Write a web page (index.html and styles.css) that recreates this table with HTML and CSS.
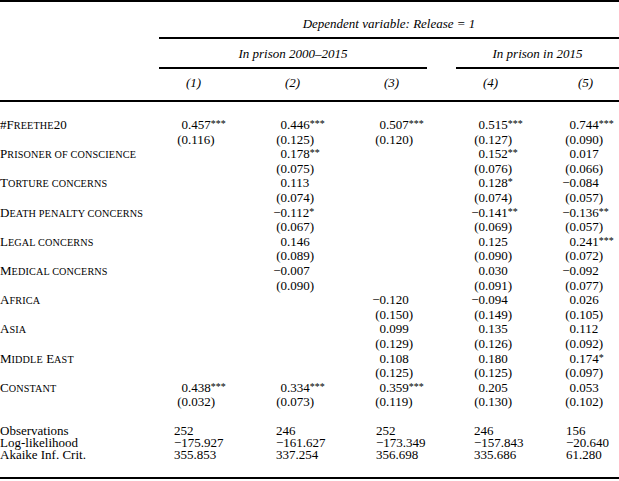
FILE: index.html
```html
<!DOCTYPE html>
<html>
<head>
<meta charset="utf-8">
<link rel="stylesheet" href="styles.css">
</head>
<body>
<div class="table">
  <div class="hrow h1">
    <div class="lab"></div>
    <div class="span">Dependent variable: Release = 1</div>
  </div>
  <div class="hrow h2">
    <div class="lab"></div>
    <div class="span s1">In prison 2000–2015</div>
    <div class="gap"></div>
    <div class="span s2">In prison in 2015</div>
  </div>
  <div class="grid h3">
    <div></div>
    <div class="mh">(1)</div>
    <div class="mh">(2)</div>
    <div class="mh">(3)</div>
    <div class="mh">(4)</div>
    <div class="mh last">(5)</div>
  </div>

  <div class="grid body">
    <div class="lab">#F<span class="sm">reethe</span>20</div>
    <div class="c"><span class="i">0</span>.457<span class="st">***</span></div>
    <div class="c"><span class="i">0</span>.446<span class="st">***</span></div>
    <div class="c"><span class="i">0</span>.507<span class="st">***</span></div>
    <div class="c"><span class="i">0</span>.515<span class="st">***</span></div>
    <div class="c"><span class="i">0</span>.744<span class="st">***</span></div>
    <div></div>
    <div class="c"><span class="i">(0</span>.116)</div>
    <div class="c"><span class="i">(0</span>.125)</div>
    <div class="c"><span class="i">(0</span>.120)</div>
    <div class="c"><span class="i">(0</span>.127)</div>
    <div class="c"><span class="i">(0</span>.090)</div>

    <div class="lab">P<span class="sm">risoner of conscience</span></div>
    <div></div>
    <div class="c"><span class="i">0</span>.178<span class="st">**</span></div>
    <div></div>
    <div class="c"><span class="i">0</span>.152<span class="st">**</span></div>
    <div class="c"><span class="i">0</span>.017</div>
    <div></div><div></div>
    <div class="c"><span class="i">(0</span>.075)</div>
    <div></div>
    <div class="c"><span class="i">(0</span>.076)</div>
    <div class="c"><span class="i">(0</span>.066)</div>

    <div class="lab">T<span class="sm">orture concerns</span></div>
    <div></div>
    <div class="c"><span class="i">0</span>.113</div>
    <div></div>
    <div class="c"><span class="i">0</span>.128<span class="st">*</span></div>
    <div class="c"><span class="i">−0</span>.084</div>
    <div></div><div></div>
    <div class="c"><span class="i">(0</span>.074)</div>
    <div></div>
    <div class="c"><span class="i">(0</span>.074)</div>
    <div class="c"><span class="i">(0</span>.057)</div>

    <div class="lab">D<span class="sm">eath penalty concerns</span></div>
    <div></div>
    <div class="c"><span class="i">−0</span>.112<span class="st">*</span></div>
    <div></div>
    <div class="c"><span class="i">−0</span>.141<span class="st">**</span></div>
    <div class="c"><span class="i">−0</span>.136<span class="st">**</span></div>
    <div></div><div></div>
    <div class="c"><span class="i">(0</span>.067)</div>
    <div></div>
    <div class="c"><span class="i">(0</span>.069)</div>
    <div class="c"><span class="i">(0</span>.057)</div>

    <div class="lab">L<span class="sm">egal concerns</span></div>
    <div></div>
    <div class="c"><span class="i">0</span>.146</div>
    <div></div>
    <div class="c"><span class="i">0</span>.125</div>
    <div class="c"><span class="i">0</span>.241<span class="st">***</span></div>
    <div></div><div></div>
    <div class="c"><span class="i">(0</span>.089)</div>
    <div></div>
    <div class="c"><span class="i">(0</span>.090)</div>
    <div class="c"><span class="i">(0</span>.072)</div>

    <div class="lab">M<span class="sm">edical concerns</span></div>
    <div></div>
    <div class="c"><span class="i">−0</span>.007</div>
    <div></div>
    <div class="c"><span class="i">0</span>.030</div>
    <div class="c"><span class="i">−0</span>.092</div>
    <div></div><div></div>
    <div class="c"><span class="i">(0</span>.090)</div>
    <div></div>
    <div class="c"><span class="i">(0</span>.091)</div>
    <div class="c"><span class="i">(0</span>.077)</div>

    <div class="lab">A<span class="sm">frica</span></div>
    <div></div><div></div>
    <div class="c"><span class="i">−0</span>.120</div>
    <div class="c"><span class="i">−0</span>.094</div>
    <div class="c"><span class="i">0</span>.026</div>
    <div></div><div></div><div></div>
    <div class="c"><span class="i">(0</span>.150)</div>
    <div class="c"><span class="i">(0</span>.149)</div>
    <div class="c"><span class="i">(0</span>.105)</div>

    <div class="lab">A<span class="sm">sia</span></div>
    <div></div><div></div>
    <div class="c"><span class="i">0</span>.099</div>
    <div class="c"><span class="i">0</span>.135</div>
    <div class="c"><span class="i">0</span>.112</div>
    <div></div><div></div><div></div>
    <div class="c"><span class="i">(0</span>.129)</div>
    <div class="c"><span class="i">(0</span>.126)</div>
    <div class="c"><span class="i">(0</span>.092)</div>

    <div class="lab">M<span class="sm">iddle</span> E<span class="sm">ast</span></div>
    <div></div><div></div>
    <div class="c"><span class="i">0</span>.108</div>
    <div class="c"><span class="i">0</span>.180</div>
    <div class="c"><span class="i">0</span>.174<span class="st">*</span></div>
    <div></div><div></div><div></div>
    <div class="c"><span class="i">(0</span>.125)</div>
    <div class="c"><span class="i">(0</span>.125)</div>
    <div class="c"><span class="i">(0</span>.097)</div>

    <div class="lab">C<span class="sm">onstant</span></div>
    <div class="c"><span class="i">0</span>.438<span class="st">***</span></div>
    <div class="c"><span class="i">0</span>.334<span class="st">***</span></div>
    <div class="c"><span class="i">0</span>.359<span class="st">***</span></div>
    <div class="c"><span class="i">0</span>.205</div>
    <div class="c"><span class="i">0</span>.053</div>
    <div></div>
    <div class="c"><span class="i">(0</span>.032)</div>
    <div class="c"><span class="i">(0</span>.073)</div>
    <div class="c"><span class="i">(0</span>.119)</div>
    <div class="c"><span class="i">(0</span>.130)</div>
    <div class="c"><span class="i">(0</span>.102)</div>
  </div>

  <div class="grid stats">
    <div class="lab">Observations</div>
    <div class="s">252</div>
    <div class="s">246</div>
    <div class="s">252</div>
    <div class="s">246</div>
    <div class="s">156</div>
    <div class="lab">Log-likelihood</div>
    <div class="s">−175.927</div>
    <div class="s">−161.627</div>
    <div class="s">−173.349</div>
    <div class="s">−157.843</div>
    <div class="s">−20.640</div>
    <div class="lab">Akaike Inf. Crit.</div>
    <div class="s">355.853</div>
    <div class="s">337.254</div>
    <div class="s">356.698</div>
    <div class="s">335.686</div>
    <div class="s">61.280</div>
  </div>
</div>
</body>
</html>
```
FILE: styles.css
```css
html, body {
  margin: 0;
  padding: 0;
  background: #fff;
}
body {
  font-family: "Liberation Serif", "Times New Roman", serif;
  font-size: 13px;
  color: #000;
}
.table {
  width: 619px;
  height: 479px;
  border-top: 2px solid #000;
  border-bottom: 2px solid #000;
  box-sizing: border-box;
}
.hrow {
  display: flex;
  font-style: italic;
  line-height: 15px;
}
.hrow .lab {
  width: 159px;
  flex: none;
}
.h1 .span {
  flex: 1;
  text-align: center;
  height: 37px;
  box-sizing: border-box;
  padding-top: 14px;
  border-bottom: 2px solid #000;
}
.h2 .span {
  text-align: center;
  height: 30px;
  box-sizing: border-box;
  padding-top: 7px;
  border-bottom: 2px solid #000;
}
.h2 .s1 { width: 268px; }
.h2 .gap { width: 29px; }
.h2 .s2 { flex: 1; }
.grid {
  display: grid;
  grid-template-columns: 150px 99px 99px 99px 91px 81px;
}
.h3 {
  height: 33px;
  box-sizing: border-box;
  padding-top: 6px;
  border-bottom: 2px solid #000;
  font-style: italic;
  line-height: 15px;
}
.mh { padding-left: 36px; }
.mh.last { padding-left: 40px; }
.body {
  padding-top: 16px;
  grid-auto-rows: 14.6px;
  line-height: 14.6px;
}
.lab {
  white-space: nowrap;
}
.sm {
  text-transform: uppercase;
  font-size: 10.2px;
  letter-spacing: 0.15px;
}
.c {
  white-space: nowrap;
}
.c .i {
  display: inline-block;
  width: 38px;
  text-align: right;
}
.st {
  font-size: 10px;
  position: relative;
  top: -2px;
}
.stats {
  padding-top: 15px;
  grid-auto-rows: 12.3px;
  line-height: 12.3px;
}
.s { white-space: nowrap; }
.stats > :nth-child(6n+2) { padding-left: 24px; }
.stats > :nth-child(6n+3) { padding-left: 27px; }
.stats > :nth-child(6n+4) { padding-left: 28px; }
.stats > :nth-child(6n+5) { padding-left: 27px; }
.stats > :nth-child(6n) { padding-left: 28px; }
```
